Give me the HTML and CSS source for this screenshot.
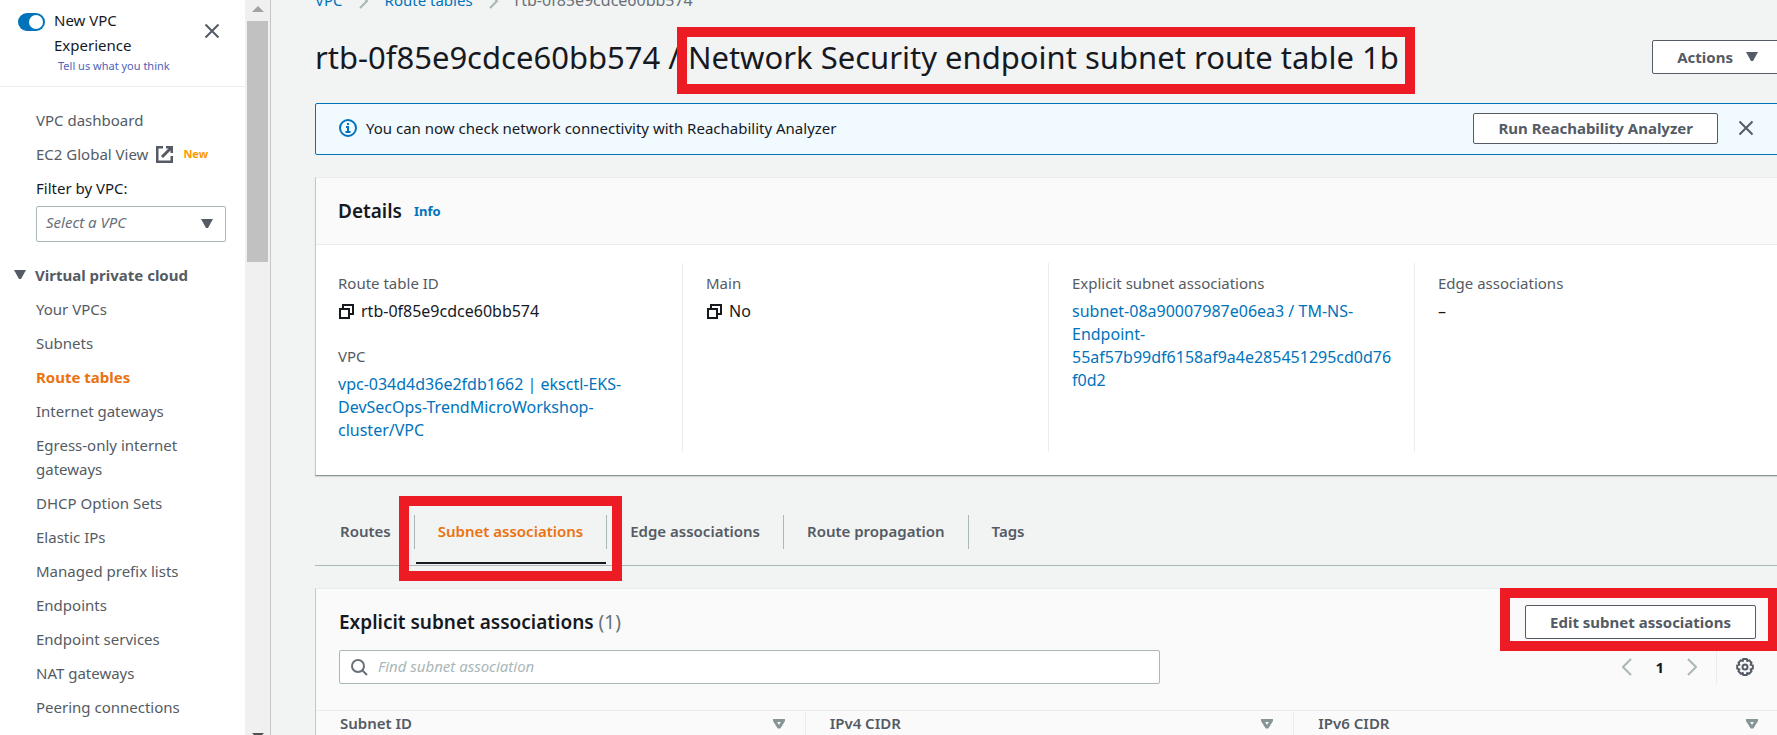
FILE: index.html
```
<!DOCTYPE html>
<html lang="en">
<head>
    <meta charset="UTF-8">
    <meta name="viewport" content="width=device-width, initial-scale=1.0">
    <title>Route tables | VPC Console</title>
    <link rel="stylesheet" href="styles.css">
</head>
<body>
    <div class="layout">
        <aside class="sidebar">
            <div class="sidebar-content">
                <div class="sidebar-header">
                    <input type="checkbox" id="experience" class="toggle" checked>
                    <div class="experience">
                        <label for="experience">New VPC Experience</label>
                        <a href="#" class="feedback">Tell us what you think</a>
                    </div>
                    <button class="icon-button close-nav" aria-label="Close navigation">
                        <svg width="16" height="16" viewBox="0 0 16 16"><path d="M1.500 1.500l13 13M14.500 1.500l-13 13"/></svg>
                    </button>
                </div>

                <nav class="nav">
                    <ul class="nav-list">
                        <li><a href="#">VPC dashboard</a></li>
                        <li class="nav-external">
                            <a href="#">EC2 Global View</a>
                            <svg class="external" width="17" height="17" viewBox="0 0 17 17"><path d="M7 1H1v15h15v-6M10 1h6v6M16 1L6 11"/></svg>
                            <span class="new">New</span>
                        </li>
                    </ul>
                    <label class="filter-label" for="vpc-filter">Filter by VPC:</label>
                    <div class="select-wrap">
                        <select id="vpc-filter" class="vpc-select">
                            <option>Select a VPC</option>
                        </select>
                        <svg class="caret" width="12" height="10" viewBox="0 0 12 10"><path d="M0 0h12L7 9H5z"/></svg>
                    </div>
                    <h3 class="nav-title">
                        <svg class="caret" width="12" height="10" viewBox="0 0 12 10"><path d="M0 0h12L7 9H5z"/></svg>
                        Virtual private cloud
                    </h3>
                    <ul class="nav-list">
                        <li><a href="#">Your VPCs</a></li>
                        <li><a href="#">Subnets</a></li>
                        <li><a href="#" class="current">Route tables</a></li>
                        <li><a href="#">Internet gateways</a></li>
                        <li><a href="#">Egress-only internet gateways</a></li>
                        <li><a href="#">DHCP Option Sets</a></li>
                        <li><a href="#">Elastic IPs</a></li>
                        <li><a href="#">Managed prefix lists</a></li>
                        <li><a href="#">Endpoints</a></li>
                        <li><a href="#">Endpoint services</a></li>
                        <li><a href="#">NAT gateways</a></li>
                        <li><a href="#">Peering connections</a></li>
                    </ul>
                </nav>
            </div>
            <div class="scrollbar">
                <svg width="12" height="6" viewBox="0 0 12 6"><path d="M0 6L6 0l6 6z" fill="#a3a3a3"/></svg>
                <div class="thumb"></div>
                <svg class="scroll-down" width="12" height="6" viewBox="0 0 12 6"><path d="M0 0h12L6 6z" fill="#505050"/></svg>
            </div>
        </aside>

        <main class="main">
            <div class="content">
                <nav class="breadcrumb">
                    <a href="#">VPC</a>
                    <svg width="10" height="16" viewBox="0 0 10 16"><path d="M1 1l7 7-7 7"/></svg>
                    <a href="#">Route tables</a>
                    <svg width="10" height="16" viewBox="0 0 10 16"><path d="M1 1l7 7-7 7"/></svg>
                    <span>rtb-0f85e9cdce60bb574</span>
                </nav>

                <header class="page-header">
                    <h1>rtb-0f85e9cdce60bb574 / <span class="marked marked-title">Network Security endpoint subnet route table 1b</span></h1>
                    <button class="button">Actions
                        <svg class="caret" width="12" height="10" viewBox="0 0 12 10"><path d="M0 0h12L7 9H5z"/></svg>
                    </button>
                </header>

                <div class="flash">
                    <svg class="info-icon" width="18" height="18" viewBox="0 0 18 18"><circle cx="9" cy="9" r="8"/><path d="M7 8h2v5M6.500 13h5M8 5h2"/></svg>
                    <p>You can now check network connectivity with Reachability Analyzer</p>
                    <button class="button button-small">Run Reachability Analyzer</button>
                    <button class="icon-button" aria-label="Dismiss">
                        <svg width="16" height="16" viewBox="0 0 16 16"><path d="M1.500 1.500l13 13M14.500 1.500l-13 13"/></svg>
                    </button>
                </div>

                <section class="panel details">
                    <div class="details-header">
                        <h2>Details</h2>
                        <a href="#" class="info">Info</a>
                    </div>
                    <div class="columns">
                        <dl class="column">
                            <dt>Route table ID</dt>
                            <dd class="copy">
                                <svg width="17" height="17" viewBox="0 0 17 17"><path d="M5 5V2h10v9h-3M2 6h9v9H2z"/></svg>
                                rtb-0f85e9cdce60bb574
                            </dd>
                            <dt>VPC</dt>
                            <dd><a href="#">vpc-034d4d36e2fdb1662 | eksctl-EKS-<wbr>DevSecOps-TrendMicroWorkshop-<wbr>cluster/VPC</a></dd>
                        </dl>
                        <dl class="column">
                            <dt>Main</dt>
                            <dd class="copy">
                                <svg width="17" height="17" viewBox="0 0 17 17"><path d="M5 5V2h10v9h-3M2 6h9v9H2z"/></svg>
                                No
                            </dd>
                        </dl>
                        <dl class="column">
                            <dt>Explicit subnet associations</dt>
                            <dd><a href="#">subnet-08a90007987e06ea3 / TM-NS-Endpoint-55af57b99df6158af9a4e285451295cd0d76f0d2</a></dd>
                        </dl>
                        <dl class="column">
                            <dt>Edge associations</dt>
                            <dd>–</dd>
                        </dl>
                    </div>
                </section>

                <div class="tabs" role="tablist">
                    <button class="tab" role="tab">Routes</button>
                    <button class="tab active marked marked-tab" role="tab" aria-selected="true">Subnet associations</button>
                    <button class="tab" role="tab">Edge associations</button>
                    <button class="tab" role="tab">Route propagation</button>
                    <button class="tab" role="tab">Tags</button>
                </div>

                <section class="panel associations">
                    <div class="associations-header">
                        <h2>Explicit subnet associations <span class="counter">(1)</span></h2>
                        <div class="marked marked-button">
                            <button class="button">Edit subnet associations</button>
                        </div>
                    </div>
                    <div class="tools">
                        <div class="search">
                            <svg width="17" height="17" viewBox="0 0 17 17"><circle cx="7" cy="7" r="6"/><path d="M11 11l5 5"/></svg>
                            <input type="text" placeholder="Find subnet association" aria-label="Find subnet association">
                        </div>
                        <div class="pagination">
                            <button class="icon-button arrow" aria-label="Previous page">
                                <svg width="10" height="18" viewBox="0 0 10 18"><path d="M9 1L1 9l8 8"/></svg>
                            </button>
                            <button class="page">1</button>
                            <button class="icon-button arrow" aria-label="Next page">
                                <svg width="10" height="18" viewBox="0 0 10 18"><path d="M1 1l8 8-8 8"/></svg>
                            </button>
                            <button class="icon-button settings" aria-label="Preferences">
                                <svg width="18" height="18" viewBox="0 0 18 18"><path d="M7.300 1h3.400l.6 2 2-.6 2.200 2.300-.8 1.900 2.100.8v3.200l-2.100.8.8 1.900-2.200 2.300-2-.6-.6 2H7.300l-.6-2-2 .6-2.200-2.300.8-1.900-2.100-.8V7.400l2.100-.8-.8-1.900 2.200-2.300 2 .6z"/><circle cx="9" cy="9" r="2.500"/></svg>
                            </button>
                        </div>
                    </div>
                    <table class="table">
                        <thead>
                            <tr>
                                <th><div class="th">Subnet ID <svg width="12" height="10" viewBox="0 0 12 10"><path d="M1.500 1.500h9L6.500 8h-1z"/></svg></div></th>
                                <th><div class="th">IPv4 CIDR <svg width="12" height="10" viewBox="0 0 12 10"><path d="M1.500 1.500h9L6.500 8h-1z"/></svg></div></th>
                                <th><div class="th">IPv6 CIDR <svg width="12" height="10" viewBox="0 0 12 10"><path d="M1.500 1.500h9L6.500 8h-1z"/></svg></div></th>
                            </tr>
                        </thead>
                    </table>
                </section>
            </div>
        </main>
    </div>
</body>
</html>
```

FILE: styles.css
```
* {
    box-sizing: border-box;
}

body {
    margin: 0;
    font-family: "Noto Sans", "Open Sans", sans-serif;
    font-size: 15px;
    line-height: 23px;
    color: #16191f;
    background-color: #f2f3f3;
    overflow: hidden;
}

h1, h2, h3, p, ul, dl, dd {
    margin: 0;
    padding: 0;
}

a {
    color: #0073bb;
    text-decoration: none;
}

button, input, select {
    font-family: inherit;
    font-size: 15px;
}

svg {
    fill: none;
    flex: none;
}

.layout {
    display: flex;
    height: 100vh;
}

/* sidebar */
.sidebar {
    display: flex;
    width: 271px;
    flex: none;
    background-color: #fff;
    border-right: 1px solid #c3c9ca;
}

.sidebar-content {
    flex: 1;
    overflow: hidden;
}

.sidebar-header {
    display: flex;
    align-items: flex-start;
    height: 87px;
    padding: 8px 25px 0 18px;
    border-bottom: 1px solid #eaeded;
}

.toggle {
    appearance: none;
    width: 27px;
    height: 18px;
    margin: 5px 9px 0 0;
    padding: 2px;
    border-radius: 9px;
    background-color: #0073bb;
    flex: none;
}

.toggle::before {
    content: "";
    display: block;
    width: 14px;
    height: 14px;
    margin-left: 9px;
    border-radius: 50%;
    background-color: #fff;
}

.experience {
    flex: 1;
    line-height: 25px;
}

.experience label {
    display: block;
    width: 100px;
}

.feedback {
    display: block;
    padding-left: 4px;
    font-size: 11px;
    line-height: 16px;
    color: #4f62b8;
    white-space: nowrap;
}

.icon-button {
    display: flex;
    padding: 0;
    border: 0;
    background: none;
}

.icon-button svg {
    stroke: #545b64;
    stroke-width: 2;
}

.close-nav {
    margin-top: 15px;
}

.nav {
    padding: 21px 19px 0 36px;
}

.nav-list {
    list-style: none;
}

.nav-list li {
    margin-bottom: 10px;
    line-height: 24px;
}

.nav-list a {
    color: #545b64;
}

.nav-list a.current {
    color: #ec7211;
    font-weight: bold;
}

.nav-external {
    display: flex;
    align-items: center;
}

.external {
    margin: 0 10px 0 8px;
    stroke: #545b64;
    stroke-width: 3;
}

.new {
    font-size: 11px;
    font-weight: bold;
    color: #ff9900;
}

.filter-label {
    display: block;
    line-height: 24px;
}

.select-wrap {
    position: relative;
    margin: 6px 0 21px;
}

.vpc-select {
    appearance: none;
    width: 100%;
    height: 36px;
    padding: 0 9px 5px;
    border: 1px solid #aab7b8;
    border-radius: 2px;
    background-color: #fff;
    color: #687078;
    font-style: italic;
}

.caret {
    fill: #545b64;
}

.select-wrap .caret {
    position: absolute;
    right: 13px;
    top: 13px;
}

.nav-title {
    display: flex;
    align-items: center;
    gap: 9px;
    margin: 0 0 10px -22px;
    font-size: 15px;
    line-height: 24px;
    color: #545b64;
}

.scrollbar {
    display: flex;
    flex-direction: column;
    align-items: center;
    width: 25px;
    padding: 6px 2px 0;
    background-color: #f0f0f0;
}

.thumb {
    width: 21px;
    height: 241px;
    margin-top: 9px;
    background-color: #c1c1c1;
}

.scroll-down {
    margin-top: auto;
    margin-bottom: -4px;
}

/* main area, runs slightly past the right edge of the window */
.main {
    flex: 1;
    min-width: 0;
    overflow: hidden;
}

.content {
    margin: 0 -6px 0 44px;
}

.breadcrumb {
    display: flex;
    align-items: center;
    gap: 16px;
    height: 23px;
    margin-top: -11px;
    color: #687078;
}

.breadcrumb svg {
    stroke: #aab7b8;
    stroke-width: 2;
}

.breadcrumb span {
    font-size: 16px;
}

.page-header {
    display: flex;
    align-items: center;
    justify-content: space-between;
    height: 91px;
    padding-bottom: 1px;
}

h1 {
    font-size: 31px;
    font-weight: normal;
    line-height: 40px;
    white-space: nowrap;
}

.button {
    display: flex;
    align-items: center;
    gap: 13px;
    height: 34px;
    padding: 0 24px;
    border: 1px solid #545b64;
    border-radius: 2px;
    background-color: #fff;
    color: #545b64;
    font-weight: bold;
    white-space: nowrap;
}

.button-small {
    height: 31px;
}

/* red highlight frames */
.marked {
    position: relative;
}

.marked::after {
    content: "";
    position: absolute;
    border: 10px solid #ed1c24;
    pointer-events: none;
    z-index: 1;
}

.marked-title::after {
    inset: -9px -16px -16px -11px;
}

.marked-tab::after {
    inset: -19px -16px -32px -16px;
}

.marked-button::after {
    inset: -17px -22px -12px -25px;
}

.flash {
    display: flex;
    align-items: center;
    height: 52px;
    padding: 0 28px 2px 23px;
    border: 1px solid #0073bb;
    border-radius: 2px;
    background-color: #f1faff;
}

.flash p {
    flex: 1;
    margin-left: 9px;
}

.flash .icon-button {
    margin-left: 20px;
}

.info-icon {
    stroke: #0073bb;
    stroke-width: 2;
}

.panel {
    background-color: #fafafa;
    border: 1px solid #eaeded;
    border-left-color: #c3c9ca;
}

h2 {
    font-size: 19px;
    font-weight: 600;
    line-height: 24px;
}

.details {
    margin-top: 22px;
    border-bottom-color: #879596;
    box-shadow: 0 1px 1px #d5dbdb;
}

.details-header {
    display: flex;
    align-items: center;
    gap: 12px;
    height: 67px;
    padding-left: 22px;
    border-bottom: 1px solid #eaeded;
}

.info {
    font-size: 13px;
    font-weight: bold;
}

.columns {
    display: grid;
    grid-template-columns: repeat(4, 1fr);
    min-height: 230px;
    padding: 18px 2px 23px 0;
    background-color: #fff;
}

.column {
    padding: 9px 22px 0 23px;
    border-left: 1px solid #eaeded;
    overflow-wrap: anywhere;
}

.column:first-child {
    padding-left: 22px;
    border-left: 0;
}

.column dt {
    margin-bottom: 5px;
    color: #545b64;
}

.column dd {
    margin-bottom: 22px;
    font-size: 16px;
}

.column dd:last-child {
    margin-bottom: 0;
}

.copy {
    display: flex;
    align-items: center;
    gap: 6px;
}

.copy svg {
    stroke: #16191f;
    stroke-width: 2;
}

/* tabs */
.tabs {
    display: flex;
    margin-top: 39px;
    padding-bottom: 16px;
    border-bottom: 1px solid #aab7b8;
}

.tab {
    height: 34px;
    padding: 0 23px 2px;
    border: 0;
    border-right: 1px solid #aab7b8;
    background: none;
    color: #545b64;
    font-weight: 600;
}

.tab:first-child {
    padding-left: 25px;
}

.tab:last-child {
    border-right: 0;
}

.tab.active {
    color: #ec7211;
}

/* line under the selected tab */
.tab.active::before {
    content: "";
    position: absolute;
    left: 1px;
    right: 0;
    bottom: -15px;
    height: 2px;
    background-color: #16191f;
}

/* associations */
.associations {
    margin-top: 22px;
}

.associations-header {
    display: flex;
    align-items: center;
    justify-content: space-between;
    padding: 16px 26px 0 23px;
}

.counter {
    color: #687078;
    font-weight: normal;
}

.tools {
    display: flex;
    justify-content: space-between;
    padding: 11px 28px 26px 23px;
}

.search {
    display: flex;
    align-items: center;
    gap: 10px;
    width: 58%;
    height: 34px;
    padding: 0 11px;
    border: 1px solid #aab7b8;
    border-radius: 2px;
    background-color: #fff;
}

.search svg {
    stroke: #687078;
    stroke-width: 2;
}

.search input {
    flex: 1;
    padding: 0 0 2px;
    border: 0;
    outline: 0;
    background: none;
}

.search input::placeholder {
    color: #aab7b8;
    font-style: italic;
}

.pagination {
    display: flex;
    align-items: center;
    gap: 23px;
}

.pagination .arrow svg {
    stroke: #aab7b8;
}

.page {
    padding: 0;
    border: 0;
    background: none;
    color: #16191f;
    font-weight: bold;
}

.settings {
    align-items: center;
    height: 34px;
    margin-left: -4px;
    padding-left: 19px;
    border-left: 1px solid #eaeded;
}

.table {
    width: 100%;
    border-top: 1px solid #eaeded;
    border-collapse: collapse;
    table-layout: fixed;
}

.table th {
    padding: 1px 0 9px;
    color: #545b64;
    font-weight: 600;
    text-align: left;
}

.th {
    display: flex;
    align-items: center;
    justify-content: space-between;
    padding: 0 20px 0 24px;
}

.table th + th .th {
    border-left: 1px solid #eaeded;
}

.table th:last-child .th {
    padding-right: 24px;
}

.th svg {
    stroke: #879596;
    stroke-width: 3;
}
```
